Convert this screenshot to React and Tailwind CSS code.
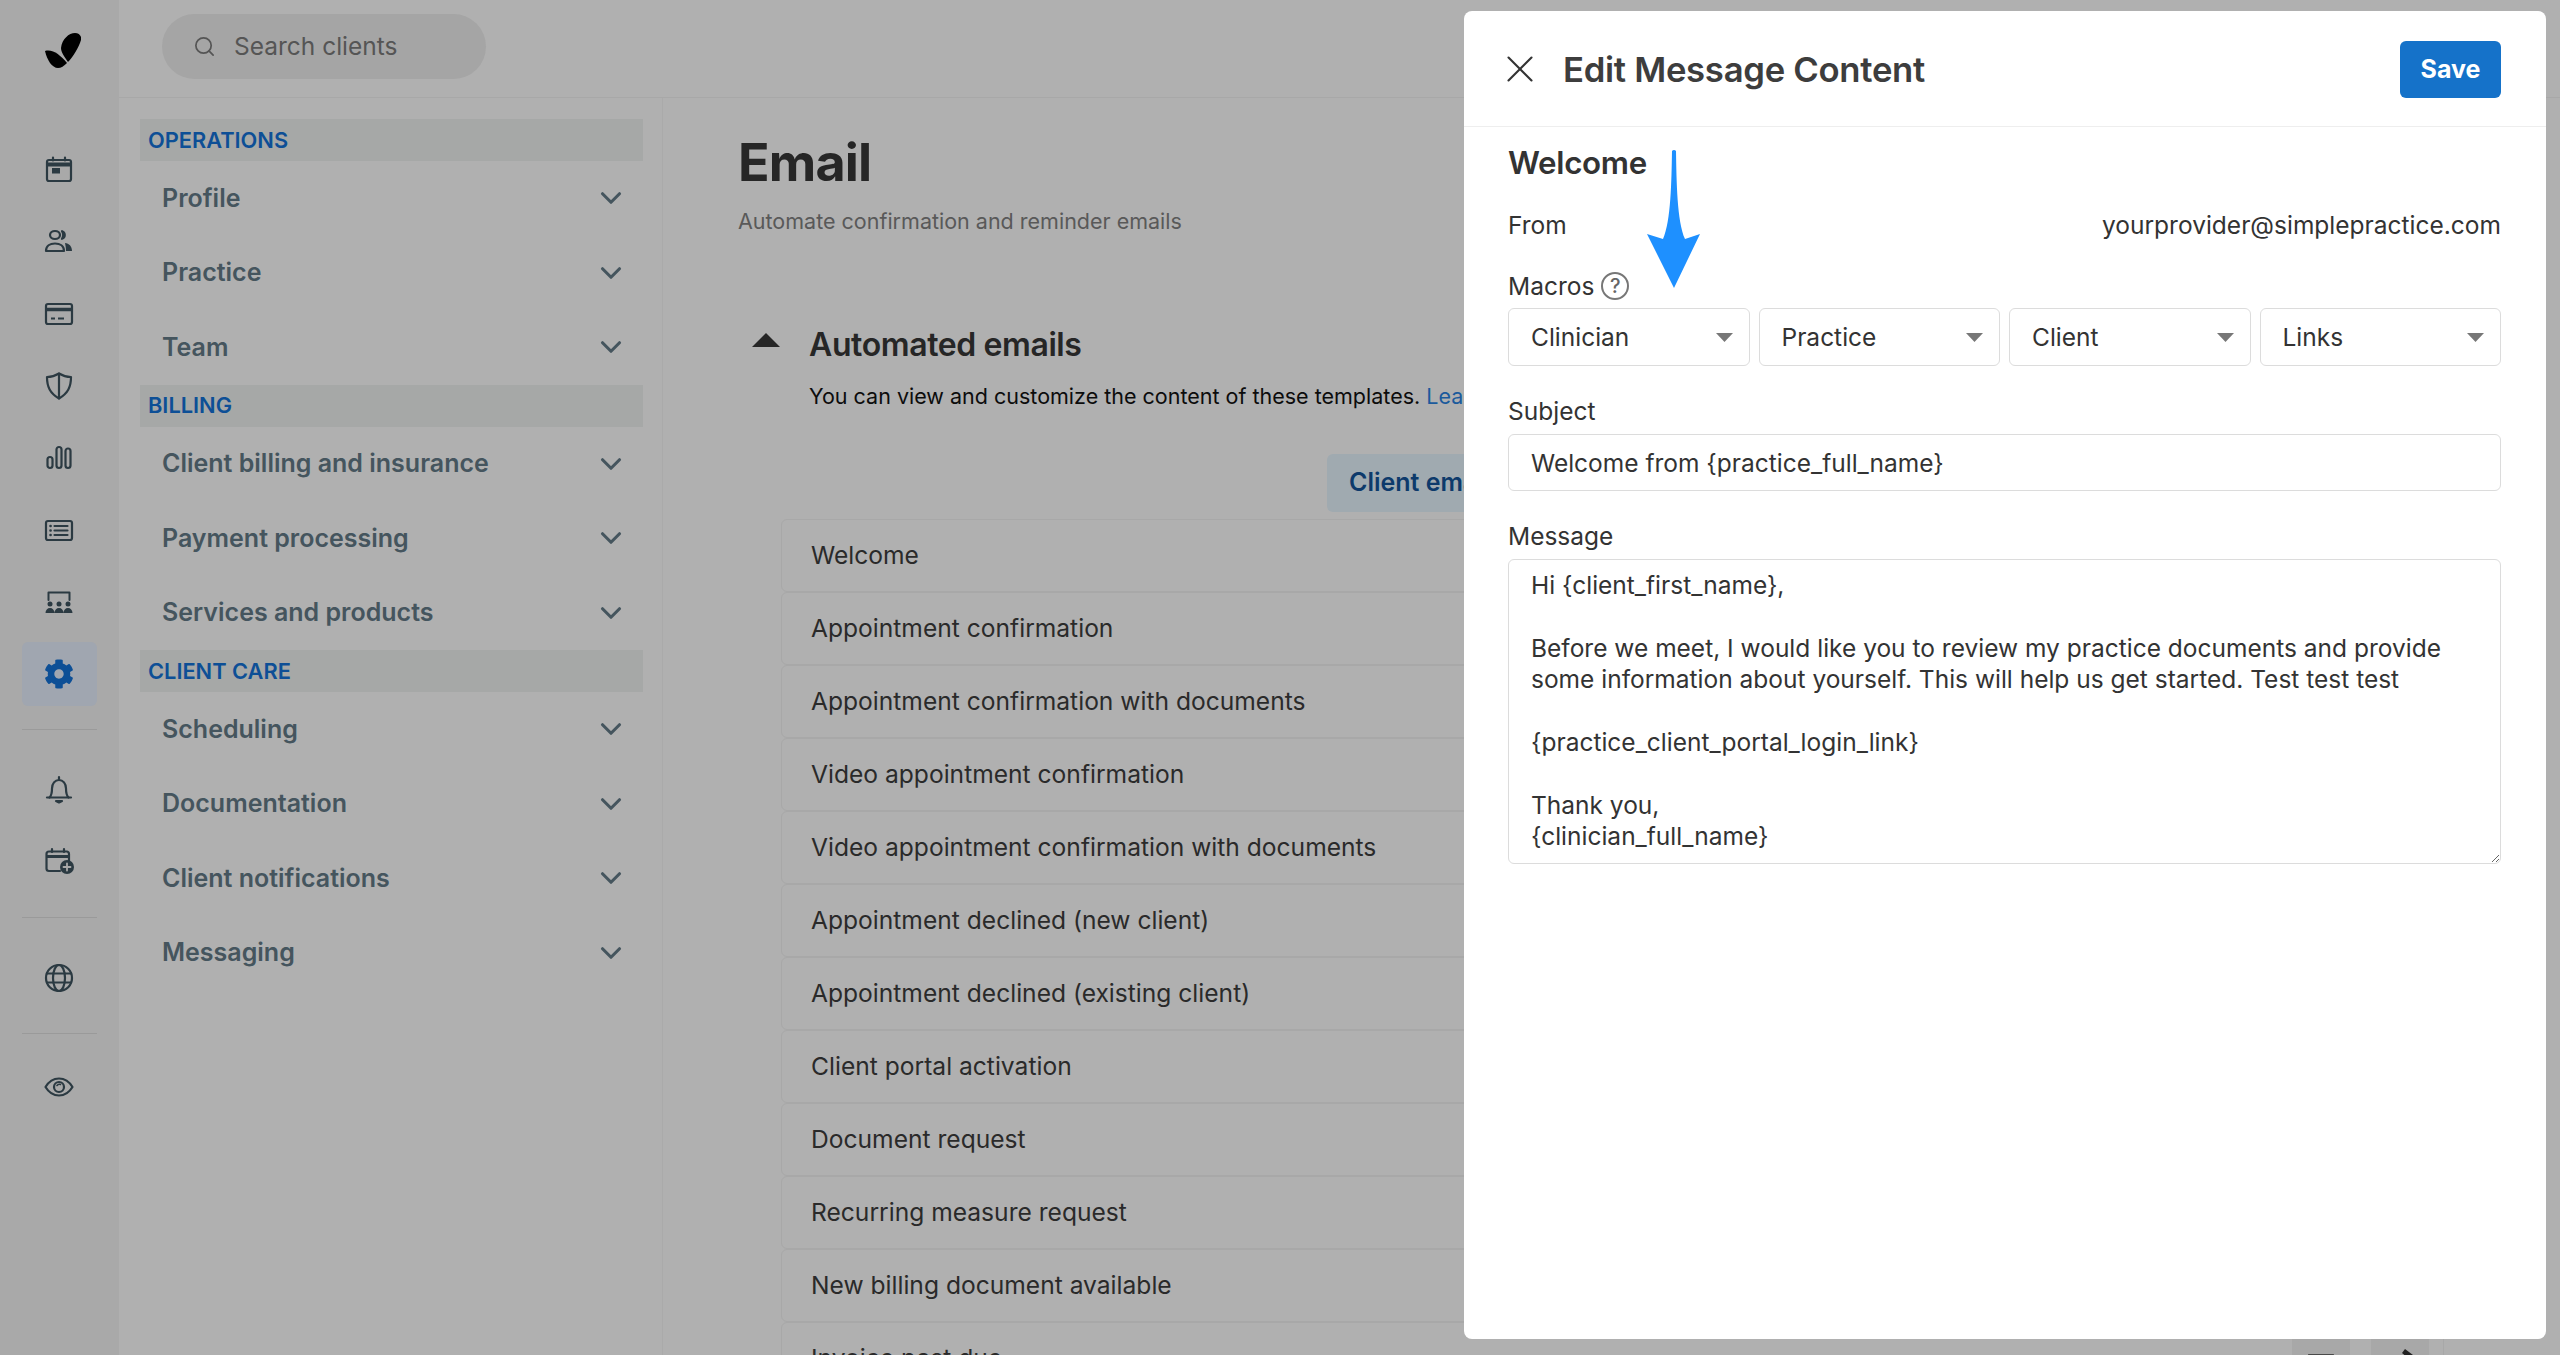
import { ChevronDown, Search, X } from "lucide-react";
import { FaCog } from "react-icons/fa";

const FONT = { fontFamily: "Inter, sans-serif" };

const NAV = [
  { title: "OPERATIONS", items: ["Profile", "Practice", "Team"] },
  { title: "BILLING", items: ["Client billing and insurance", "Payment processing", "Services and products"] },
  { title: "CLIENT CARE", items: ["Scheduling", "Documentation", "Client notifications", "Messaging"] },
];

const TEMPLATES = [
  "Welcome",
  "Appointment confirmation",
  "Appointment confirmation with documents",
  "Video appointment confirmation",
  "Video appointment confirmation with documents",
  "Appointment declined (new client)",
  "Appointment declined (existing client)",
  "Client portal activation",
  "Document request",
  "Recurring measure request",
  "New billing document available",
  "Invoice past due",
];

const MESSAGE = `Hi {client_first_name},

Before we meet, I would like you to review my practice documents and provide some information about yourself. This will help us get started. Test test test

{practice_client_portal_login_link}

Thank you,
{clinician_full_name}`;

function RailIcon({ children }) {
  return (
    <svg width="32" height="32" viewBox="0 0 32 32" fill="none" stroke="#2b3a42" strokeWidth="2.2" strokeLinecap="round" strokeLinejoin="round">
      {children}
    </svg>
  );
}

const ICONS = [
  <RailIcon key="calendar">
    <rect x="4" y="6" width="24" height="21" rx="2" />
    <path d="M4 10.5h24" strokeWidth="4" strokeLinecap="butt" />
    <path d="M10 3.5v3M22 3.5v3" />
    <rect x="9" y="14" width="8" height="5.5" fill="#2b3a42" stroke="none" />
  </RailIcon>,
  <RailIcon key="clients">
    <ellipse cx="12" cy="9" rx="5" ry="4" />
    <path d="M3 25c0-5 4-7.500 9-7.500s9 2.500 9 7.500z" />
    <path d="M19 5.200a4 4 0 0 1 0 7.600a7 7 0 0 0 0-7.600z" fill="#2b3a42" />
    <path d="M22 17c4 .5 7 3 7 8h-6c0-3-.5-5.500-1-8z" fill="#2b3a42" stroke="none" />
  </RailIcon>,
  <RailIcon key="card">
    <rect x="3" y="6" width="26" height="20" rx="2" />
    <path d="M3 11.500h26" strokeWidth="3.500" strokeLinecap="butt" />
    <path d="M8 20.500h4M15 20.500h6" strokeLinecap="butt" />
  </RailIcon>,
  <RailIcon key="shield">
    <path d="M16 3.500c4 2.500 8 3.500 12 3.500c0 10-3 16-12 21.500C7 23 4 17 4 7c4 0 8-1 12-3.500z" />
    <path d="M16 3.500v25" />
  </RailIcon>,
  <RailIcon key="bars">
    <rect x="4.500" y="15" width="5" height="11" rx="2.500" />
    <rect x="13.500" y="5" width="5" height="21" rx="2.500" />
    <rect x="22.500" y="6.500" width="5" height="19.500" rx="2.500" />
  </RailIcon>,
  <RailIcon key="list">
    <rect x="3" y="7" width="26" height="19" rx="2" />
    <path d="M11.500 12h13M11.500 16.500h13M11.500 21h13" />
    <path d="M7.500 12h.1M7.500 16.500h.1M7.500 21h.1" strokeWidth="2.600" />
  </RailIcon>,
  <RailIcon key="room">
    <path d="M5.500 14V6.500h21V14" strokeWidth="2" />
    <g fill="#2b3a42" stroke="none">
      <circle cx="7" cy="18" r="2.500" />
      <circle cx="16" cy="18" r="2.500" />
      <circle cx="25" cy="18" r="2.500" />
      <path d="M2.500 27c0-3 2-5 4.500-5s4.500 2 4.500 5zM11.500 27c0-3 2-5 4.500-5s4.500 2 4.500 5zM20.500 27c0-3 2-5 4.500-5s4.500 2 4.500 5z" />
    </g>
  </RailIcon>,
];

function RailDivider({ className }) {
  return <div className={`w-[75px] h-px bg-[#9a9a9a] shrink-0 ${className}`} />;
}

function RailItem({ children }) {
  return <div className="h-[72px] w-full pr-px flex items-center justify-center shrink-0">{children}</div>;
}

function Rail() {
  return (
    <div className="w-[119px] shrink-0 bg-[#a9a9a9] flex flex-col items-center">
      <div className="h-[134px] w-full flex justify-center pt-[33px] pl-[7px] shrink-0">
        <svg width="36" height="35" viewBox="0 0 36 35" fill="#000">
          <path d="M16 15C17 6 24 0 30 0C34 0 37 3 36 7C34 14 28 24 23 29C20 24 16 20 16 15z" />
          <path d="M0 18C8 16 15 22 22 30C19 33 16 35 13 35C7 35 2 27 0 18z" />
        </svg>
      </div>
      {ICONS.map((icon, i) => (
        <RailItem key={i}>{icon}</RailItem>
      ))}
      <RailItem>
        <div className="w-[75px] h-[64px] rounded-md bg-[#a0a6b0] flex items-center justify-center">
          <FaCog size={30} color="#0d4f96" />
        </div>
      </RailItem>
      <RailDivider className="mt-[19px]" />
      <div className="mt-[24px] w-full">
        <RailItem>
          <RailIcon>
            <path d="M4 23.500h24" />
            <path d="M6.500 23.500c2-2 2.500-5 2.500-9c0-5 3-8.500 7-8.500s7 3.500 7 8.500c0 4 .5 7 2.500 9" />
            <path d="M16 3v2.500" />
            <path d="M13 27h6l-3 1.500z" fill="#2b3a42" />
          </RailIcon>
        </RailItem>
        <RailItem>
          <RailIcon>
            <path d="M17 25H6a2.500 2.500 0 0 1-2.500-2.500V8A2.500 2.500 0 0 1 6 5.500h18A2.500 2.500 0 0 1 26 8v7" />
            <path d="M3.500 10.500H26" strokeWidth="3" strokeLinecap="butt" />
            <path d="M9 3v3M21 3v3" />
            <circle cx="24" cy="21" r="7" fill="#2b3a42" stroke="none" />
            <path d="M24 17.500v7M20.500 21h7" stroke="#a9a9a9" strokeWidth="1.800" />
          </RailIcon>
        </RailItem>
      </div>
      <RailDivider className="mt-[19px]" />
      <div className="mt-[24px] w-full">
        <RailItem>
          <RailIcon>
            <circle cx="16" cy="16" r="13" />
            <ellipse cx="16" cy="16" rx="6" ry="13" />
            <path d="M4 11.500h24M4 20.500h24" />
          </RailIcon>
        </RailItem>
      </div>
      <RailDivider className="mt-[19px]" />
      <div className="mt-[17px] w-full">
        <RailItem>
          <RailIcon>
            <path d="M2.500 16c3-5 8-8.500 13.500-8.500s10.500 3.500 13.500 8.500c-3 5-8 8.500-13.500 8.500s-10.500-3.500-13.500-8.500z" />
            <circle cx="16" cy="16" r="5" />
            <path d="M14 14.500a3 3 0 0 1 3.500-1" strokeWidth="1.600" />
          </RailIcon>
        </RailItem>
      </div>
    </div>
  );
}

function SettingsNav() {
  return (
    <div className="w-[544px] shrink-0 border-r border-[#aaaaaa] pl-[21px] pr-[19px] pt-[21px]">
      {NAV.map((group) => (
        <div key={group.title}>
          <div className="h-[42px] bg-[#a6a8a7] pl-2 flex items-center text-[21.800px] font-semibold text-[#0d4f96]">
            {group.title}
          </div>
          {group.items.map((item) => (
            <div key={item} className="h-[74.500px] pl-[22px] pr-[15px] flex items-center justify-between text-[25px] font-semibold text-[#45555e]">
              <span>{item}</span>
              <ChevronDown size={34} strokeWidth={2.2} color="#45555e" />
            </div>
          ))}
        </div>
      ))}
    </div>
  );
}

function TemplateRow({ name }) {
  return (
    <div className="h-[73px] shrink-0 border border-[#a8a8a8] rounded-md pl-[29px] pr-[14px] flex items-center justify-between text-[24.600px] text-[#2a2a2a]">
      <span>{name}</span>
      <div className="flex gap-[21px]">
        <div className="w-[58px] h-[58px] bg-[#a8a8a8] rounded flex justify-center pt-[24px]">
          <svg width="26" height="4" viewBox="0 0 26 4" fill="#4a4a4a"><path d="M0 0h26l-1 4H1z" /></svg>
        </div>
        <div className="w-[58px] h-[58px] bg-[#a8a8a8] rounded flex justify-center pt-[19px]">
          <svg width="26" height="26" viewBox="0 0 26 26" fill="#222"><path d="M18 0l8 6l-4 4l-7-6zM13 6l7 6l-10 12H3v-7z" /></svg>
        </div>
      </div>
    </div>
  );
}

function EmailPage() {
  return (
    <div className="flex-1 min-w-0 pl-[75px] overflow-hidden">
      <h1 className="mt-[26px] text-[52px] leading-[78px] font-bold text-[#262626] tracking-[-0.8px]">Email</h1>
      <p className="mt-[3px] text-[21.500px] leading-[32px] text-[#595959]">Automate confirmation and reminder emails</p>
      <div className="mt-[88px] flex">
        <svg className="mt-[8px] ml-[14px] shrink-0" width="28" height="14" viewBox="0 0 28 14" fill="#262626"><path d="M14 0l14 14H0z" /></svg>
        <div className="ml-[29px]">
          <h2 className="text-[32px] leading-[40px] font-semibold text-[#262626] tracking-[-0.4px]">Automated emails</h2>
          <p className="mt-[16px] text-[21.500px] leading-[30px] text-[#0c0c0c] whitespace-nowrap">
            You can view and customize the content of these templates. <span className="text-[#1b5a9c]">Learn more</span>
          </p>
        </div>
      </div>
      <div className="ml-[43px] mr-[116px]">
        <div className="mt-[43px] pl-[546px]">
          <div className="inline-flex h-[58px] items-center rounded-md bg-[#a0aab0] px-[22px] text-[25px] font-semibold text-[#0d3a6b]">
            Client emails
          </div>
        </div>
        <div className="mt-[7px] flex flex-col">
          {TEMPLATES.map((name) => (
            <TemplateRow key={name} name={name} />
          ))}
        </div>
      </div>
    </div>
  );
}

function MacroSelect({ label }) {
  return (
    <div className="h-[58px] border border-[#dcdcdc] rounded-md pl-[22px] pr-[16px] flex items-center justify-between text-[24.500px] text-[#333]">
      <span>{label}</span>
      <svg width="17" height="9" viewBox="0 0 17 9" fill="#777"><path d="M0 0h17l-8.500 9z" /></svg>
    </div>
  );
}

function EditModal() {
  return (
    <div className="absolute left-[1464px] top-[11px] w-[1082px] h-[1328px] bg-white rounded-lg text-[#333]">
      <div className="h-[116px] border-b border-[#eeeeee] pl-[33px] pr-[45px] flex items-center">
        <X size={46} strokeWidth={1.1} color="#333" />
        <h2 className="ml-[20px] mt-[1px] text-[34.700px] font-semibold text-[#3d3d3d] tracking-[-0.3px]">Edit Message Content</h2>
        <div className="ml-auto w-[101px] h-[57px] mt-[1px] pt-[2px] rounded-md bg-[#1572c9] flex items-center justify-center text-[25px] font-bold text-white">
          Save
        </div>
      </div>
      <div className="relative pl-[44px] pr-[45px] pt-[16px]">
        <h3 className="text-[31.300px] leading-[40px] font-semibold text-[#333] tracking-[-0.3px]">Welcome</h3>
        <div className="mt-[24px] flex justify-between text-[24.500px] leading-[36px]">
          <span>From</span>
          <span>yourprovider@simplepractice.com</span>
        </div>
        <div className="mt-[25px] flex items-center text-[24.500px] leading-[36px]">
          <span>Macros</span>
          <span className="ml-[7px] w-[28px] h-[28px] rounded-full border-2 border-[#777] flex items-center justify-center text-[20px] font-medium text-[#666]">?</span>
        </div>
        <div className="mt-[4px] grid grid-cols-4 gap-[9px]">
          <MacroSelect label="Clinician" />
          <MacroSelect label="Practice" />
          <MacroSelect label="Client" />
          <MacroSelect label="Links" />
        </div>
        <label className="block mt-[27px] text-[24.500px] leading-[36px]">Subject</label>
        <input
          readOnly
          value="Welcome from {practice_full_name}"
          className="block mt-[5px] w-full h-[57px] border border-[#dcdcdc] rounded-md px-[22px] text-[24.500px] text-[#333] outline-none"
        />
        <label className="block mt-[27px] text-[24.500px] leading-[36px]">Message</label>
        <textarea
          readOnly
          defaultValue={MESSAGE}
          className="block mt-[5px] w-full h-[305px] border border-[#dcdcdc] rounded-md px-[22px] pt-[10px] text-[24.500px] leading-[31.400px] text-[#333] outline-none resize-y"
        />
        {/* annotation arrow from the screenshot */}
        <svg className="absolute left-[183px] top-[23px]" width="54" height="138" viewBox="0 0 54 138" fill="#1e90ff">
          <path d="M25 1c1-1.300 3-1.300 4 0c.5 30 1 70 9 88l15-5l-26 54L0 84l16 5c8-18 8.500-58 9-88z" />
        </svg>
      </div>
    </div>
  );
}

export default function App() {
  return (
    <div className="relative h-screen w-full overflow-hidden flex bg-[#b0b0b0]" style={FONT}>
      <Rail />
      <div className="flex-1 min-w-0 flex flex-col">
        <div className="h-[98px] shrink-0 border-b border-[#a8a8a8] pl-[43px] flex items-center">
          <div className="w-[324px] h-[65px] mt-[-4px] rounded-full bg-[#a5a5a5] pl-[31px] flex items-center gap-[18px] text-[24.500px] text-[#555]">
            <Search size={23} strokeWidth={1.8} color="#555" />
            <span>Search clients</span>
          </div>
        </div>
        <div className="flex-1 min-h-0 flex">
          <SettingsNav />
          <EmailPage />
        </div>
      </div>
      <EditModal />
    </div>
  );
}
